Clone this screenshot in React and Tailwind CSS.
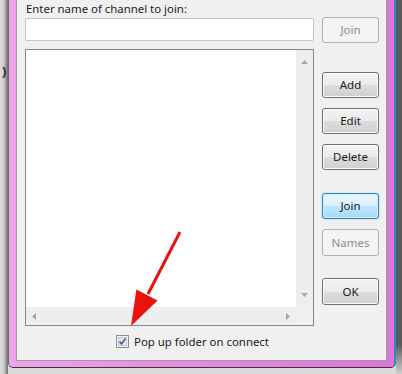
import React from "react";
import clsx from "clsx";

const BUTTON_STYLES = {
  normal:
    "border-[#707070] bg-[linear-gradient(#f2f2f2,#ebebeb_50%,#dddddd_50%,#cfcfcf)] text-[#1b1b1b] shadow-[inset_0_0_0_1px_#fbfbfb]",
  primary:
    "border-[#3c7fb1] bg-[linear-gradient(#eaf6fd,#d9f0fc_50%,#bee6fd_50%,#a7d9f5)] text-[#1b1b1b] shadow-[inset_0_0_0_1px_#cdeefc,0_0_2px_#8fd0f5]",
  disabled: "border-[#adb2b5] bg-[#f4f4f4] text-[#8d8d8d]",
};

const WinButton = ({ label, variant = "normal", className }) => (
  <div
    className={clsx(
      "flex h-[26px] w-[57px] items-center justify-center rounded-[3px] border text-[11.5px]",
      BUTTON_STYLES[variant],
      className
    )}
  >
    {label}
  </div>
);

const Tri = ({ dir }) => {
  const pts = {
    up: "0,4 3.5,0 7,4",
    down: "0,0 7,0 3.5,4",
    left: "4,0 4,7 0,3.5",
    right: "0,0 0,7 4,3.5",
  };
  const vertical = dir === "up" || dir === "down";
  return (
    <svg width={vertical ? 7 : 4} height={vertical ? 4 : 7}>
      <polygon points={pts[dir]} fill="#a6a6a6" />
    </svg>
  );
};

const ListBox = () => (
  <div className="flex h-[277px] w-[289px] flex-col border border-[#828790] bg-white">
    <div className="flex min-h-0 flex-1">
      <div className="flex-1" />
      <div className="flex w-[17px] flex-col items-center justify-between bg-[#eeeeee] py-[10px]">
        <Tri dir="up" />
        <Tri dir="down" />
      </div>
    </div>
    <div className="flex h-[18px]">
      <div className="flex flex-1 items-center justify-between bg-[#eeeeee] px-[6px]">
        <Tri dir="left" />
        <Tri dir="right" />
      </div>
      <div className="w-[17px] bg-[#f0f0f0]" />
    </div>
  </div>
);

const CheckBox = () => (
  <svg width="13" height="13" viewBox="0 0 13 13">
    <rect x="0.5" y="0.5" width="12" height="12" fill="#f4f4f4" stroke="#8e8f8f" />
    <rect x="2.5" y="2.5" width="8" height="8" fill="#e6e9ef" stroke="#c3c8d0" />
    <path d="M3.5 6.5 L5.5 9 L9.5 3.5" fill="none" stroke="#3f5a95" strokeWidth="1.6" />
  </svg>
);

export default function App() {
  return (
    <div className="relative flex h-[374px] w-[402px] overflow-hidden bg-[#dadada] font-['Noto_Sans','Open_Sans',sans-serif]">
      {/* desktop strip on the left */}
      <div className="relative h-full w-[8px] bg-linear-to-r from-[#dedede] via-[#c8c8c8] to-[#6c6c6c]">
        <span className="absolute left-[2px] top-[62px] text-[13px] font-bold text-[#2a2a2a]">)</span>
      </div>

      {/* dialog window */}
      <div className="flex h-[368px] w-[388px] flex-col rounded-b-[5px] border-b border-l border-r-2 border-b-[#3a3a3a] border-l-[#6a6a6a] border-r-[#2f86c8] bg-[linear-gradient(90deg,#efa3ea,#e68ee0_40%,#df74d8)] px-[7px] pb-[6px]">
        <div className="flex flex-1 flex-col border border-t-0 border-[#9a9a9a] bg-[#f0f0f0] pl-[8px] text-[#1b1b1b]">
          <div className="pl-[1px] pt-[1px] text-[11.4px] leading-[15px]">Enter name of channel to join:</div>

          <div className="flex h-[27px] items-center gap-[8px]">
            <div className="h-[23px] w-[289px] rounded-[2px] border border-[#b3c6da] bg-white" />
            <WinButton label="Join" variant="disabled" />
          </div>

          <div className="mt-[6px] flex gap-[8px]">
            <ListBox />
            <div className="flex flex-col">
              <WinButton label="Add" className="mt-[23px]" />
              <WinButton label="Edit" className="mt-[10px]" />
              <WinButton label="Delete" className="mt-[10px]" />
              <WinButton label="Join" variant="primary" className="mt-[23px]" />
              <WinButton label="Names" variant="disabled" className="mt-[10px] h-[27px]" />
              <WinButton label="OK" className="mt-[22px] h-[27px]" />
            </div>
          </div>

          <div className="mt-[9px] flex items-center gap-[5px] pl-[91px] text-[11.4px]">
            <CheckBox />
            <span className="leading-[13px]">Pop up folder on connect</span>
          </div>
        </div>
      </div>

      {/* desktop strip on the right */}
      <div className="h-full w-[6px] bg-[linear-gradient(#5a5a5a,#5a5a5a_92%,#cfcfcf)]" />

      {/* red annotation arrow */}
      <svg className="pointer-events-none absolute left-0 top-0" width="402" height="374">
        <line x1="180" y1="232" x2="148" y2="294" stroke="#e8120f" strokeWidth="3" />
        <polygon points="131,326 157.6,300.5 136.4,289.5" fill="#e8120f" />
      </svg>
    </div>
  );
}
